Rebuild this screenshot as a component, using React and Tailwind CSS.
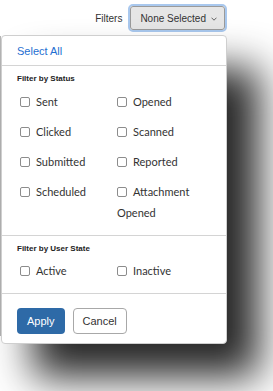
import React from "react";

const Box = () => (
  <span className="inline-block w-[10px] h-[10px] border border-[#8c8c8c] rounded-[2px] bg-white align-[-1px] mr-[6px]" />
);

const Item = ({ label }) => (
  <div className="pl-[3px] leading-[21px] text-[11px] text-[#333] font-['Lato',sans-serif]">
    <Box />
    {label}
  </div>
);

export default function App() {
  const status = ["Sent", "Opened", "Clicked", "Scanned", "Submitted", "Reported", "Scheduled", "Attachment Opened"];
  return (
    <div className="relative w-[273px] h-[391px] bg-white overflow-hidden font-['Liberation_Sans',Arial,sans-serif]">
      <div className="absolute left-0 top-[36px] w-[1px] h-[300px] bg-[#b5b5b5]" />
      <div className="flex items-center justify-end gap-[6px] pr-[46px] pt-[4px]">
        <span className="text-[10px] text-[#333]">Filters</span>
        <div className="rounded-[5px] border-2 border-[#a9c8ee]">
          <div className="flex items-center h-[24px] pl-[9px] pr-[7px] gap-[5px] rounded-[3px] border border-[#9a9a9a] bg-[#e6e6e6] text-[10px] text-[#333]">
            <span>None Selected</span>
            <svg width="6" height="4" viewBox="0 0 6 4" className="mt-[1px]">
              <path d="M0.5 0.7 L3 3.2 L5.5 0.7" fill="none" stroke="#555" strokeWidth="0.9" />
            </svg>
          </div>
        </div>
      </div>
      <div className="relative ml-[1px] mt-[3px] w-[226px] bg-white border border-[#cfcfcf] rounded-[4px] shadow-[32px_33px_40px_rgba(0,0,0,0.85)]">
        <div className="h-[30px] flex items-center px-[15px] border-b border-[#d4d4d4]">
          <span className="text-[11px] text-[#1f6fd1] mt-[2px]">Select All</span>
        </div>
        <div className="px-[15px] pt-[7px] pb-[12px] border-b border-[#d4d4d4]">
          <div className="text-[8px] font-bold leading-[12px] text-[#222]">Filter by Status</div>
          <div className="grid grid-cols-2 gap-y-[9px] mt-[6px]">
            {status.map((s) => (
              <Item key={s} label={s} />
            ))}
          </div>
        </div>
        <div className="px-[15px] pt-[7px] pb-[12px] border-b border-[#d4d4d4]">
          <div className="text-[8px] font-bold leading-[12px] text-[#222]">Filter by User State</div>
          <div className="grid grid-cols-2 mt-[5px]">
            <Item label="Active" />
            <Item label="Inactive" />
          </div>
        </div>
        <div className="flex gap-[8px] px-[15px] pt-[14px] pb-[9px]">
          <button className="h-[26px] px-[10px] rounded-[4px] bg-[#2e6aa7] text-white text-[11px]">Apply</button>
          <button className="h-[26px] px-[9px] rounded-[4px] border border-[#a8a8a8] bg-white text-[#333] text-[11px]">Cancel</button>
        </div>
      </div>
    </div>
  );
}
